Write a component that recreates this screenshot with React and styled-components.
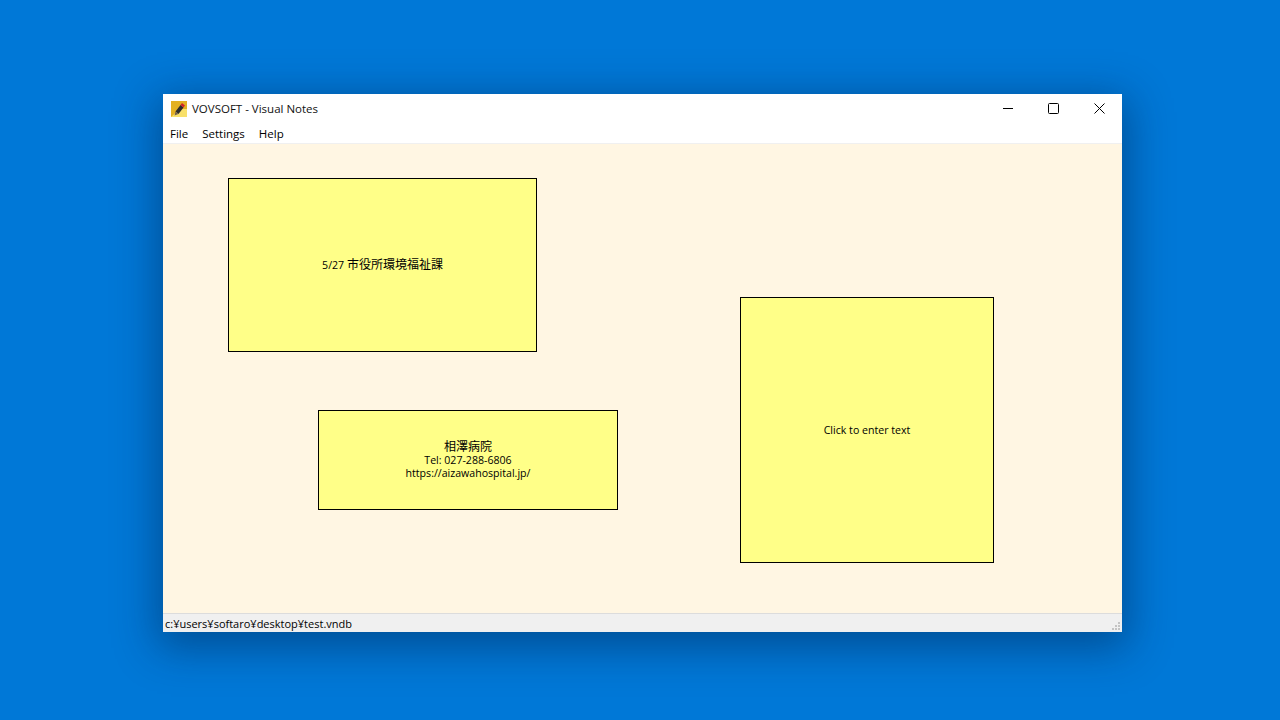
import React from 'react'
import styled, {createGlobalStyle} from 'styled-components'

const Global = createGlobalStyle`
html, body {
  margin: 0;
  height: 100%;
  background: #0078d7;
}
#root {
  height: 100%;
}
`;

const Desktop = styled.div`
height: 720px;
width: 1280px;
overflow: hidden;
padding: 94px 0 0 163px;
box-sizing: border-box;
background: #0078d7;
font-family: "Open Sans", "Noto Sans CJK JP", sans-serif;
font-size: 11.5px;
color: #000;
`;

const Win = styled.div`
width: 959px;
height: 538px;
display: flex;
flex-direction: column;
background: #fff;
box-shadow: 0 10px 40px 6px rgba(0, 30, 70, 0.45);
`;

const TitleBar = styled.div`
height: 29px;
display: flex;
align-items: center;
padding-left: 8px;
color: #111;
`;

const AppTitle = styled.span`
margin-left: 5px;
flex: 1;
`;

const WinButton = styled.div`
width: 46px;
height: 29px;
box-sizing: border-box;
padding-left: 1px;
display: flex;
align-items: center;
justify-content: center;
`;

const MenuBar = styled.div`
height: 20px;
display: flex;
align-items: center;
gap: 14px;
padding-left: 7px;
border-bottom: 1px solid #f0f0f0;
`;

const Canvas = styled.div`
position: relative;
flex: 1;
background: #fff6e3;
border-bottom: 1px solid #dcdcdc;
`;

const Note = styled.div`
position: absolute;
left: ${p => p.$x}px;
top: ${p => p.$y}px;
width: ${p => p.$w}px;
height: ${p => p.$h}px;
box-sizing: border-box;
display: flex;
align-items: center;
justify-content: center;
text-align: center;
background: #ffff88;
border: 1px solid #000;
font-size: 10.6px;
line-height: 13px;
color: #000;
`;

const Kanji = styled.span`
font-size: 12px;
`;

const StatusBar = styled.div`
position: relative;
height: 18px;
display: flex;
align-items: center;
padding-left: 2px;
background: #f0f0f0;
font-size: 11px;
`;

const Grip = styled.svg`
position: absolute;
right: 1px;
bottom: 1px;
`;

function AppIcon() {
    return (
        <svg width="16" height="16" viewBox="0 0 16 16">
            <rect width="16" height="16" fill="#e3b021"/>
            <path d="M0 16 L16 16 L16 8 L9 8 Z" fill="#f8e06a"/>
            <path d="M4.5 10.5 L9.5 4 L12.5 6.5 L7.5 13 Z" fill="#2c2c2c"/>
            <path d="M9.5 4 L11 2 L14 4.5 L12.5 6.5 Z" fill="#d0242c"/>
            <path d="M4.5 10.5 L7.5 13 L3.5 14.5 Z" fill="#77624a"/>
        </svg>
    )
}

function App() {
    return (
        <Desktop>
            <Global/>
            <Win>
                <TitleBar>
                    <AppIcon/>
                    <AppTitle>VOVSOFT - Visual Notes</AppTitle>
                    <WinButton>
                        <svg width="11" height="11"><path d="M1 5.5H11" stroke="#000"/></svg>
                    </WinButton>
                    <WinButton>
                        <svg width="11" height="11"><rect x="0.5" y="0.5" width="10" height="10" rx="1" fill="none" stroke="#000"/></svg>
                    </WinButton>
                    <WinButton>
                        <svg width="11" height="11"><path d="M0.5 0.5L10.5 10.5M10.5 0.5L0.5 10.5" stroke="#000"/></svg>
                    </WinButton>
                </TitleBar>
                <MenuBar>
                    <span>File</span>
                    <span>Settings</span>
                    <span>Help</span>
                </MenuBar>
                <Canvas>
                    <Note $x={65} $y={34} $w={309} $h={174}><span>5/27 <Kanji>市役所環境福祉課</Kanji></span></Note>
                    <Note $x={155} $y={266} $w={300} $h={100}>
                        <div><Kanji>相澤病院</Kanji><br/>Tel: 027-288-6806<br/>https://aizawahospital.jp/</div>
                    </Note>
                    <Note $x={577} $y={153} $w={254} $h={266}>Click to enter text</Note>
                </Canvas>
                <StatusBar>
                    c:¥users¥softaro¥desktop¥test.vndb
                    <Grip width="10" height="10" viewBox="0 0 10 10" fill="#c4c4c4">
                        <rect x="7" y="1" width="2" height="2"/>
                        <rect x="4" y="4" width="2" height="2"/>
                        <rect x="7" y="4" width="2" height="2"/>
                        <rect x="1" y="7" width="2" height="2"/>
                        <rect x="4" y="7" width="2" height="2"/>
                        <rect x="7" y="7" width="2" height="2"/>
                    </Grip>
                </StatusBar>
            </Win>
        </Desktop>
    )
}

export default App
